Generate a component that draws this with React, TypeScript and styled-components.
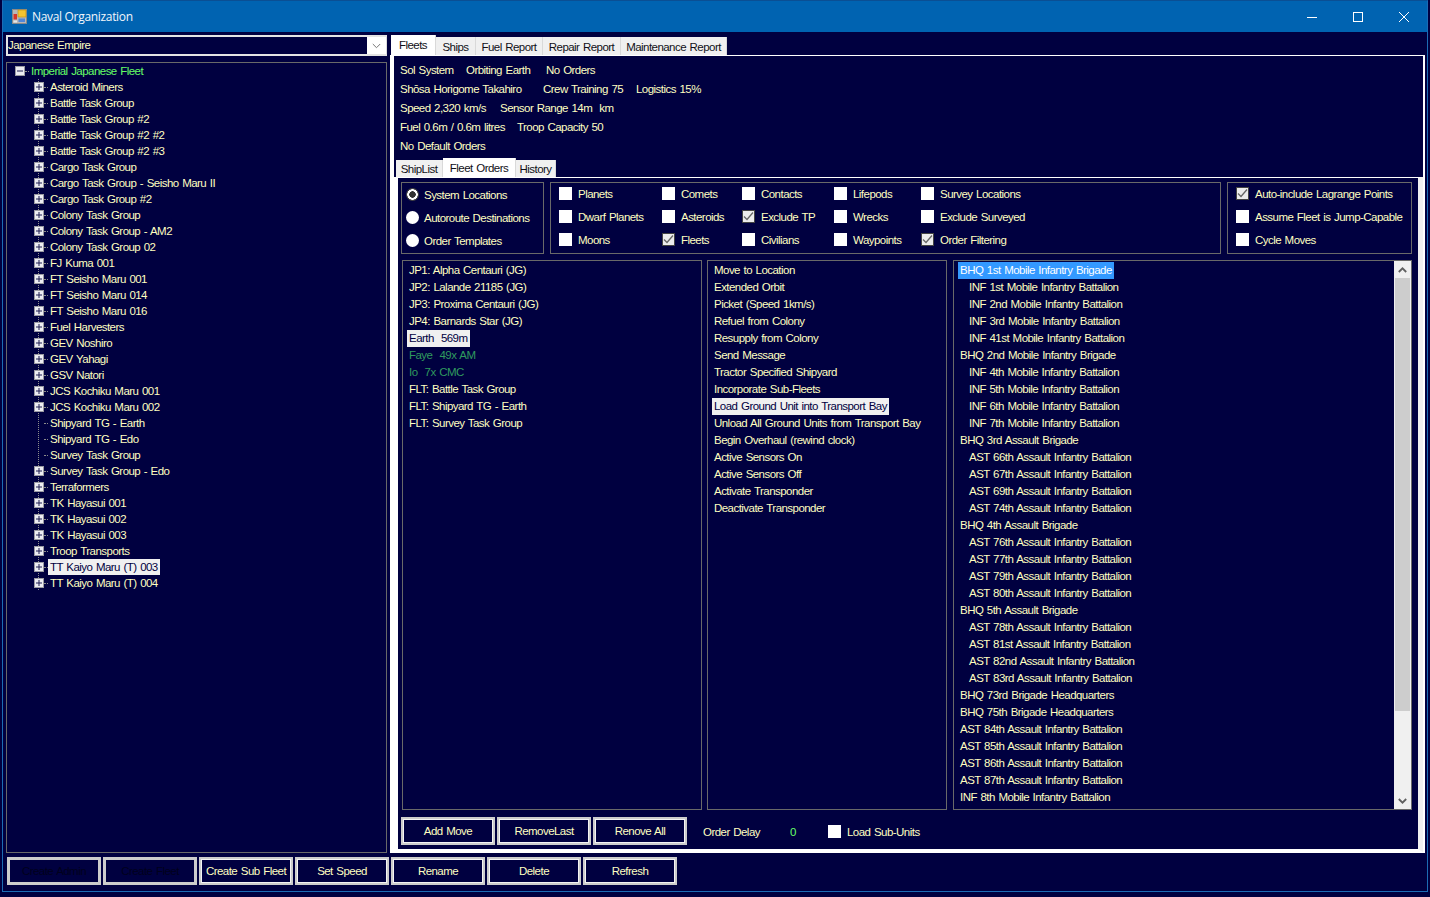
import React from "react";
import styled, { createGlobalStyle } from "styled-components";

const NAVY = "#000040";
const CREAM = "#ffffc0";
const LINE = "#696969";

const Global = createGlobalStyle`
  html, body { margin: 0; padding: 0; background: ${NAVY}; overflow: hidden; }
  * { box-sizing: border-box; }
  body { font-family: "Liberation Sans", Arial, sans-serif; font-size: 11.5px; color: ${CREAM}; }
`;

const Frame = styled.div`
  margin-left: 2px;
  width: 1426px;
  height: 892px;
  border: 1px solid #1c6cb4;
  border-top-color: #0a4f94;
  display: flex;
  flex-direction: column;
  letter-spacing: -0.54px;
  word-spacing: 0.9px;
`;
const TitleBar = styled.div`
  height: 31px;
  flex: none;
  background: #0063b1;
  display: flex;
  align-items: center;
  padding-left: 9px;
  color: #f2f6fb;
`;
const TitleText = styled.span`
  font-family: "Open Sans", "Noto Sans", sans-serif;
  font-size: 12px;
  letter-spacing: -0.32px;
  word-spacing: 0;
  margin-left: 5px;
  flex: 1;
`;
const WinButton = styled.div`
  width: 46px;
  height: 31px;
  display: flex;
  align-items: center;
  justify-content: center;
`;
const Main = styled.div`
  display: flex;
  height: 818px;
  margin-top: 3px;
  padding-left: 3px;
  flex: none;
`;
const LeftCol = styled.div`
  width: 381px;
  flex: none;
  display: flex;
  flex-direction: column;
  gap: 6px;
`;
const Combo = styled.div`
  height: 21px;
  flex: none;
  border: 2px solid #e4e4e4;
  border-right: none;
  display: flex;
  background: ${NAVY};
  line-height: 17px;
`;
const ComboText = styled.span`
  flex: 1;
`;
const ComboArrow = styled.div`
  width: 20px;
  background: #fff;
  display: flex;
  align-items: center;
  justify-content: center;
  border-right: 1px solid #ddd;
`;
const Tree = styled.div`
  flex: 1;
  border: 1px solid ${LINE};
`;
const TreeRow = styled.div<{ $child?: boolean }>`
  height: 16px;
  display: flex;
  align-items: center;
  padding-left: ${(p) => (p.$child ? 27 : 8)}px;
  ${(p) =>
    p.$child
      ? `background: repeating-linear-gradient(to bottom, #8c8c8c 0 1px, transparent 1px 2px) 31px 0 / 1px 100% no-repeat;`
      : ""}
`;
const Stub = styled.span`
  width: 4px;
  flex: none;
  border-top: 1px dotted #8c8c8c;
`;
const TreeLabel = styled.span<{ $selected?: boolean; $root?: boolean }>`
  padding: 0 2px;
  line-height: 16px;
  white-space: pre;
  color: ${(p) => (p.$selected ? "#000040" : p.$root ? "#66ff66" : CREAM)};
  background: ${(p) => (p.$selected ? "#f0f0f0" : "transparent")};
`;
const RightCol = styled.div`
  flex: 1;
  margin-left: 3px;
  margin-right: 2px;
  display: flex;
  flex-direction: column;
`;
const TabStrip = styled.div<{ $h: number; $pad: number }>`
  height: ${(p) => p.$h}px;
  flex: none;
  display: flex;
  align-items: flex-end;
  padding-left: ${(p) => p.$pad}px;
`;
const Tab = styled.div<{ $active?: boolean; $w: number }>`
  width: ${(p) => p.$w}px;
  height: ${(p) => (p.$active ? "100%" : "calc(100% - 2px)")};
  background: ${(p) => (p.$active ? "#fff" : "#f0f0f0")};
  border-right: 1px solid #d9d9d9;
  color: #101018;
  display: flex;
  align-items: center;
  justify-content: center;
  padding-top: ${(p) => (p.$active ? 0 : 1)}px;
  flex: none;
`;
const Panel = styled.div`
  flex: 1;
  background: #fff;
  padding: 1px 2px 1px 4px;
  display: flex;
  flex-direction: column;
  min-height: 0;
`;
const Info = styled.div`
  background: ${NAVY};
  flex: none;
`;
const InfoRows = styled.div`
  height: 102px;
  padding: 4px 0 0 6px;
`;
const InfoRow = styled.div`
  height: 19px;
  display: flex;
  align-items: center;
`;
const InfoCell = styled.span<{ $w?: number }>`
  width: ${(p) => (p.$w ? `${p.$w}px` : "auto")};
  white-space: pre;
`;
const SubPanel = styled.div`
  flex: 1;
  background: ${NAVY};
  border-style: solid;
  border-color: #fff #f0f0f0 #fff #fff;
  border-width: 1px 5px 3px 4px;
  padding: 4px 0 0 3px;
  display: flex;
  flex-direction: column;
  min-height: 0;
`;
const GroupRow = styled.div`
  display: flex;
  gap: 6px;
  height: 72px;
  flex: none;
`;
const GroupBox = styled.div<{ $w: number; $cols: string; $pad: number }>`
  width: ${(p) => p.$w}px;
  border: 1px solid ${LINE};
  display: grid;
  grid-template-columns: ${(p) => p.$cols};
  grid-auto-rows: 23px;
  padding-left: ${(p) => p.$pad}px;
`;
const RadioGroup = styled(GroupBox)`
  padding-top: 1px;
`;
const Option = styled.label`
  display: flex;
  align-items: center;
  white-space: pre;
  padding-bottom: 2px;
`;
const Radio = styled.span<{ $on?: boolean }>`
  width: 13px;
  height: 13px;
  flex: none;
  border-radius: 50%;
  margin-right: 5px;
  background: ${(p) =>
    p.$on
      ? "radial-gradient(circle, #333 0 3px, #fff 3.5px 5px, #444 5.5px)"
      : "#fff"};
`;
const Check = styled.span<{ $on?: boolean }>`
  width: 13px;
  height: 13px;
  flex: none;
  margin-right: 6px;
  background: ${(p) => (p.$on ? "#ececec" : "#fff")};
  border: ${(p) => (p.$on ? "1px solid #444" : "none")};
  display: inline-flex;
  align-items: center;
  justify-content: center;
`;
const ListRow = styled.div`
  display: flex;
  height: 550px;
  margin: 6px 0 0 1px;
  flex: none;
`;
const ListBox = styled.div<{ $w: number; $gap: number }>`
  width: ${(p) => p.$w}px;
  margin-right: ${(p) => p.$gap}px;
  border: 1px solid ${LINE};
  display: flex;
  flex: none;
`;
const Items = styled.div`
  flex: 1;
  padding: 1px 0 0 4px;
`;
const Item = styled.div<{ $sel?: "white" | "blue"; $green?: boolean; $indent?: boolean }>`
  height: 17px;
  line-height: 17px;
  width: fit-content;
  white-space: pre;
  padding: 0 2px;
  margin-left: ${(p) => (p.$indent ? 9 : 0)}px;
  color: ${(p) => (p.$sel === "white" ? "#000040" : p.$sel === "blue" ? "#fff" : p.$green ? "#2f9a5e" : CREAM)};
  background: ${(p) => (p.$sel === "white" ? "#f0f0f0" : p.$sel === "blue" ? "#3399ff" : "transparent")};
`;
const ScrollBar = styled.div`
  width: 17px;
  flex: none;
  background: #f0f0f0;
  display: flex;
  flex-direction: column;
  align-items: center;
`;
const ScrollArrow = styled.div`
  height: 17px;
  width: 100%;
  flex: none;
  display: flex;
  align-items: center;
  justify-content: center;
`;
const ScrollThumb = styled.div`
  width: 15px;
  height: 433px;
  flex: none;
  background: #cdcdcd;
`;
const ScrollGap = styled.div`
  flex: 1;
`;
const Footer = styled.div`
  display: flex;
  align-items: center;
  height: 28px;
  margin-top: 7px;
  flex: none;
`;
const Btn = styled.div<{ $off?: boolean }>`
  width: 94px;
  height: 28px;
  flex: none;
  margin-right: 2px;
  background: ${NAVY};
  display: flex;
  align-items: center;
  justify-content: center;
  border: ${(p) => (p.$off ? "3px solid #cccccc" : "2px solid #cccccc")};
  box-shadow: ${(p) => (p.$off ? "none" : "inset 0 0 0 1px #f4f4f4")};
  color: ${(p) => (p.$off ? "#00001c" : CREAM)};
`;
const FooterLabel = styled.span<{ $w: number; $ml?: number; $green?: boolean }>`
  width: ${(p) => p.$w}px;
  margin-left: ${(p) => p.$ml ?? 0}px;
  padding-top: 2px;
  color: ${(p) => (p.$green ? "#66ff66" : CREAM)};
  white-space: pre;
`;
const BottomBar = styled.div`
  display: flex;
  margin: 4px 0 0 4px;
  flex: none;
`;
const LeafSpacer = styled.span`
  width: 10px;
  flex: none;
`;
const TreeIcon = styled.svg`
  flex: none;
`;

const fleets = [
  "Asteroid Miners", "Battle Task Group", "Battle Task Group #2", "Battle Task Group #2 #2", "Battle Task Group #2 #3",
  "Cargo Task Group", "Cargo Task Group - Seisho Maru II", "Cargo Task Group #2", "Colony Task Group", "Colony Task Group - AM2",
  "Colony Task Group 02", "FJ Kuma 001", "FT Seisho Maru 001", "FT Seisho Maru 014", "FT Seisho Maru 016", "Fuel Harvesters",
  "GEV Noshiro", "GEV Yahagi", "GSV Natori", "JCS Kochiku Maru 001", "JCS Kochiku Maru 002", "-Shipyard TG - Earth",
  "-Shipyard TG - Edo", "-Survey Task Group", "Survey Task Group - Edo", "Terraformers", "TK Hayasui 001", "TK Hayasui 002",
  "TK Hayasui 003", "Troop Transports", "TT Kaiyo Maru (T) 003", "TT Kaiyo Maru (T) 004",
];

const locations = [
  "JP1: Alpha Centauri (JG)", "JP2: Lalande 21185 (JG)", "JP3: Proxima Centauri (JG)", "JP4: Barnards Star (JG)", "Earth  569m",
  "Faye  49x AM", "Io  7x CMC", "FLT: Battle Task Group", "FLT: Shipyard TG - Earth", "FLT: Survey Task Group",
];
const moves = [
  "Move to Location", "Extended Orbit", "Picket (Speed 1km/s)", "Refuel from Colony", "Resupply from Colony", "Send Message",
  "Tractor Specified Shipyard", "Incorporate Sub-Fleets", "Load Ground Unit into Transport Bay",
  "Unload All Ground Units from Transport Bay", "Begin Overhaul (rewind clock)", "Active Sensors On", "Active Sensors Off",
  "Activate Transponder", "Deactivate Transponder",
];
const units = [
  "BHQ 1st Mobile Infantry Brigade", ">INF 1st Mobile Infantry Battalion", ">INF 2nd Mobile Infantry Battalion",
  ">INF 3rd Mobile Infantry Battalion", ">INF 41st Mobile Infantry Battalion", "BHQ 2nd Mobile Infantry Brigade",
  ">INF 4th Mobile Infantry Battalion", ">INF 5th Mobile Infantry Battalion", ">INF 6th Mobile Infantry Battalion",
  ">INF 7th Mobile Infantry Battalion", "BHQ 3rd Assault Brigade", ">AST 66th Assault Infantry Battalion",
  ">AST 67th Assault Infantry Battalion", ">AST 69th Assault Infantry Battalion", ">AST 74th Assault Infantry Battalion",
  "BHQ 4th Assault Brigade", ">AST 76th Assault Infantry Battalion", ">AST 77th Assault Infantry Battalion",
  ">AST 79th Assault Infantry Battalion", ">AST 80th Assault Infantry Battalion", "BHQ 5th Assault Brigade",
  ">AST 78th Assault Infantry Battalion", ">AST 81st Assault Infantry Battalion", ">AST 82nd Assault Infantry Battalion",
  ">AST 83rd Assault Infantry Battalion", "BHQ 73rd Brigade Headquarters", "BHQ 75th Brigade Headquarters",
  "AST 84th Assault Infantry Battalion", "AST 85th Assault Infantry Battalion", "AST 86th Assault Infantry Battalion",
  "AST 87th Assault Infantry Battalion", "INF 8th Mobile Infantry Battalion",
];

const filterRows: [string, boolean][] = [
  ["Planets", false], ["Comets", false], ["Contacts", false], ["Lifepods", false], ["Survey Locations", false],
  ["Dwarf Planets", false], ["Asteroids", false], ["Exclude TP", true], ["Wrecks", false], ["Exclude Surveyed", false],
  ["Moons", false], ["Fleets", true], ["Civilians", false], ["Waypoints", false], ["Order Filtering", true],
];

const Tick = () => (
  <svg width="11" height="11" viewBox="0 0 11 11">
    <path d="M1 5.5 L4 8.5 L10 1.5" fill="none" stroke="#666" strokeWidth="1.3" />
  </svg>
);

const Expander = ({ open }: { open?: boolean }) => (
  <TreeIcon width="10" height="10" viewBox="0 0 10 10">
    <rect x="0.5" y="0.5" width="9" height="9" fill="#ececf2" stroke="#9a9aa2" />
    <path d={open ? "M2 5h6" : "M2 5h6M5 2v6"} stroke="#1c1c50" strokeWidth="1" />
  </TreeIcon>
);

const AppIcon = () => (
  <TreeIcon width="15" height="15" viewBox="0 0 15 15">
    <rect x="0.5" y="0.5" width="14" height="14" fill="#b8b8b8" stroke="#8a8a8a" />
    <rect x="6" y="1" width="8" height="7" fill="#f4c430" stroke="#b98a10" strokeWidth="0.6" />
    <rect x="1.5" y="5" width="3.5" height="5.5" fill="#d8342a" />
    <rect x="6.5" y="9.5" width="6.5" height="3.5" fill="#4f86d8" />
    <rect x="1.5" y="11.5" width="3.5" height="2" fill="#e8e8e8" />
  </TreeIcon>
);

const Minimize = () => (
  <svg width="10" height="10" viewBox="0 0 10 10"><path d="M0 5.5h10" stroke="#fff" /></svg>
);
const Maximize = () => (
  <svg width="10" height="10" viewBox="0 0 10 10"><rect x="0.5" y="0.5" width="9" height="9" fill="none" stroke="#fff" /></svg>
);
const Close = () => (
  <svg width="10" height="10" viewBox="0 0 10 10"><path d="M0 0L10 10M10 0L0 10" stroke="#fff" /></svg>
);
const Chevron = ({ up, color = "#606060", w = 1.8 }: { up?: boolean; color?: string; w?: number }) => (
  <svg width="9" height="6" viewBox="0 0 9 6">
    <path d={up ? "M0.8 5L4.5 1.3L8.2 5" : "M0.8 1L4.5 4.7L8.2 1"} fill="none" stroke={color} strokeWidth={w} />
  </svg>
);

export default function App() {
  return (
    <>
      <Global />
      <Frame>
        <TitleBar>
          <AppIcon />
          <TitleText>Naval Organization</TitleText>
          <WinButton><Minimize /></WinButton>
          <WinButton><Maximize /></WinButton>
          <WinButton><Close /></WinButton>
        </TitleBar>
        <Main>
          <LeftCol>
            <Combo>
              <ComboText>Japanese Empire</ComboText>
              <ComboArrow><Chevron color="#777" w={1} /></ComboArrow>
            </Combo>
            <Tree>
              <TreeRow>
                <Expander open />
                <Stub />
                <TreeLabel $root>Imperial Japanese Fleet</TreeLabel>
              </TreeRow>
              {fleets.map((f) => {
                const leaf = f.startsWith("-");
                const name = leaf ? f.slice(1) : f;
                return (
                  <TreeRow $child key={f}>
                    {leaf ? <LeafSpacer /> : <Expander />}
                    <Stub />
                    <TreeLabel $selected={name === "TT Kaiyo Maru (T) 003"}>{name}</TreeLabel>
                  </TreeRow>
                );
              })}
            </Tree>
          </LeftCol>
          <RightCol>
            <TabStrip $h={20} $pad={1}>
              <Tab $active $w={45}>Fleets</Tab>
              <Tab $w={40}>Ships</Tab>
              <Tab $w={67}>Fuel Report</Tab>
              <Tab $w={78}>Repair Report</Tab>
              <Tab $w={106}>Maintenance Report</Tab>
            </TabStrip>
            <Panel>
              <Info>
                <InfoRows>
                  <InfoRow><InfoCell $w={66}>Sol System</InfoCell><InfoCell $w={80}>Orbiting Earth</InfoCell><InfoCell>No Orders</InfoCell></InfoRow>
                  <InfoRow><InfoCell $w={143}>Shōsa Horigome Takahiro</InfoCell><InfoCell $w={93}>Crew Training 75</InfoCell><InfoCell>Logistics 15%</InfoCell></InfoRow>
                  <InfoRow><InfoCell $w={100}>Speed 2,320 km/s</InfoCell><InfoCell>Sensor Range 14m  km</InfoCell></InfoRow>
                  <InfoRow><InfoCell $w={117}>Fuel 0.6m / 0.6m litres</InfoCell><InfoCell>Troop Capacity 50</InfoCell></InfoRow>
                  <InfoRow><InfoCell>No Default Orders</InfoCell></InfoRow>
                </InfoRows>
                <TabStrip $h={19} $pad={2}>
                  <Tab $w={47}>ShipList</Tab>
                  <Tab $active $w={73}>Fleet Orders</Tab>
                  <Tab $w={40}>History</Tab>
                </TabStrip>
              </Info>
              <SubPanel>
                <GroupRow>
                  <RadioGroup $w={143} $cols="1fr" $pad={4}>
                    <Option><Radio $on />System Locations</Option>
                    <Option><Radio />Autoroute Destinations</Option>
                    <Option><Radio />Order Templates</Option>
                  </RadioGroup>
                  <GroupBox $w={671} $cols="103px 80px 92px 87px 1fr" $pad={8}>
                    {filterRows.map(([label, on]) => (
                      <Option key={label}>
                        <Check $on={on}>{on && <Tick />}</Check>{label}
                      </Option>
                    ))}
                  </GroupBox>
                  <GroupBox $w={185} $cols="1fr" $pad={8}>
                    <Option><Check $on><Tick /></Check>Auto-include Lagrange Points</Option>
                    <Option><Check />Assume Fleet is Jump-Capable</Option>
                    <Option><Check />Cycle Moves</Option>
                  </GroupBox>
                </GroupRow>
                <ListRow>
                  <ListBox $w={300} $gap={5}>
                    <Items>
                      {locations.map((l) => (
                        <Item key={l} $sel={l.startsWith("Earth") ? "white" : undefined} $green={l.startsWith("Faye") || l.startsWith("Io")}>{l}</Item>
                      ))}
                    </Items>
                  </ListBox>
                  <ListBox $w={240} $gap={6}>
                    <Items>
                      {moves.map((m) => (
                        <Item key={m} $sel={m.startsWith("Load Ground") ? "white" : undefined}>{m}</Item>
                      ))}
                    </Items>
                  </ListBox>
                  <ListBox $w={459} $gap={0}>
                    <Items>
                      {units.map((u, i) => {
                        const indent = u.startsWith(">");
                        return (
                          <Item key={u} $indent={indent} $sel={i === 0 ? "blue" : undefined}>
                            {indent ? u.slice(1) : u}
                          </Item>
                        );
                      })}
                    </Items>
                    <ScrollBar>
                      <ScrollArrow><Chevron up /></ScrollArrow>
                      <ScrollThumb />
                      <ScrollGap />
                      <ScrollArrow><Chevron /></ScrollArrow>
                    </ScrollBar>
                  </ListBox>
                </ListRow>
                <Footer>
                  <Btn>Add Move</Btn>
                  <Btn>RemoveLast</Btn>
                  <Btn>Renove All</Btn>
                  <FooterLabel $w={87} $ml={14}>Order Delay</FooterLabel>
                  <FooterLabel $w={38} $green>0</FooterLabel>
                  <Check />
                  <FooterLabel $w={100}>Load Sub-Units</FooterLabel>
                </Footer>
              </SubPanel>
            </Panel>
          </RightCol>
        </Main>
        <BottomBar>
          <Btn $off>Create Admin</Btn>
          <Btn $off>Create Fleet</Btn>
          <Btn>Create Sub Fleet</Btn>
          <Btn>Set Speed</Btn>
          <Btn>Rename</Btn>
          <Btn>Delete</Btn>
          <Btn>Refresh</Btn>
        </BottomBar>
      </Frame>
    </>
  );
}
